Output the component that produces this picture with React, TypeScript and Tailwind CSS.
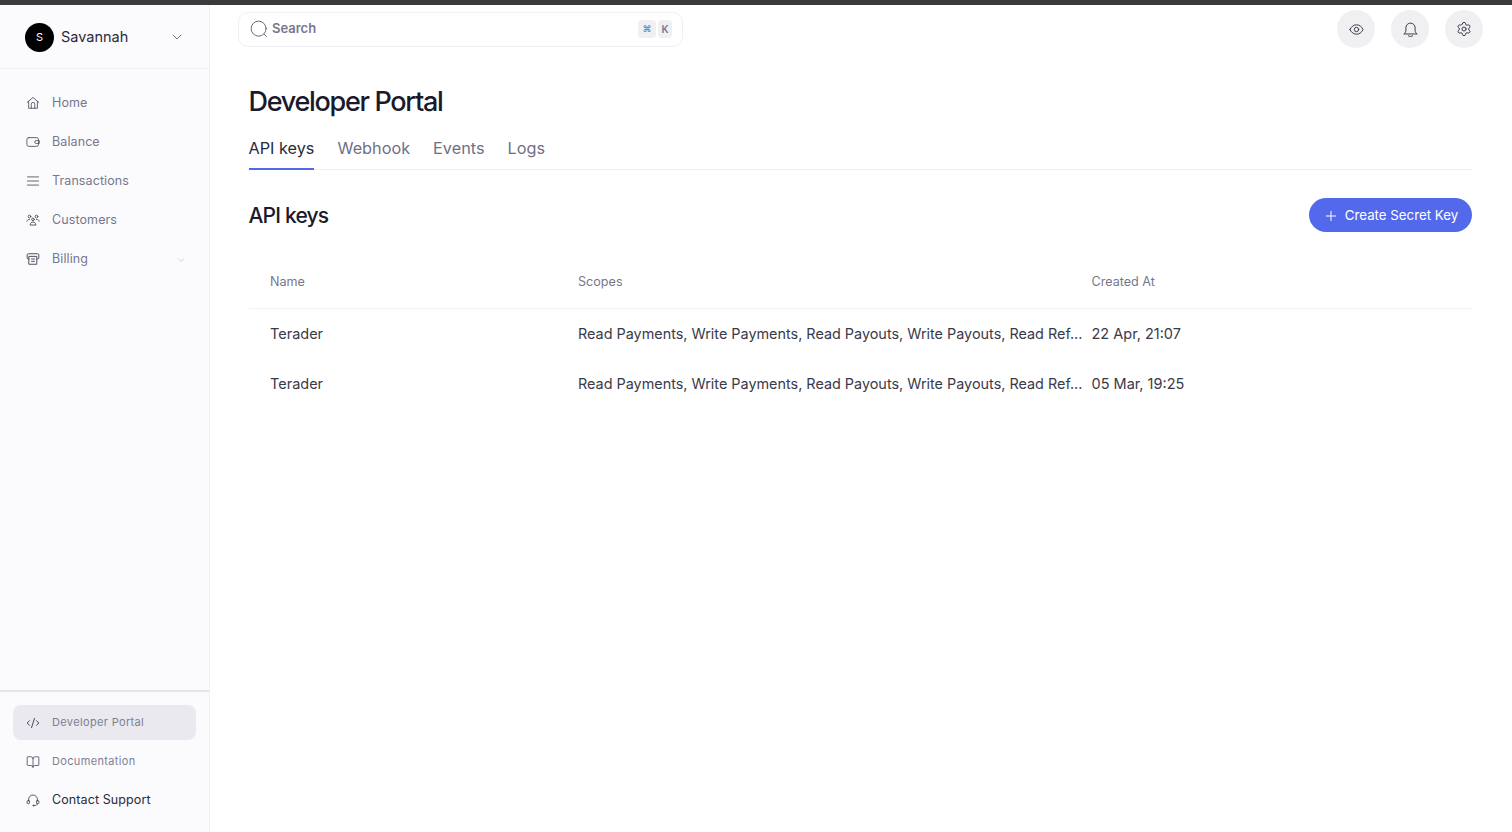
import { BookOpen, ChevronDown, CodeXml, Plus, Settings } from "lucide-react";
import type { ReactNode } from "react";

function Svg({ size = 14, children, width = 1.5 }: { size?: number; children: ReactNode; width?: number }) {
  return (
    <svg width={size} height={size} viewBox="0 0 24 24" fill="none" stroke="currentColor" strokeWidth={width} strokeLinecap="round" strokeLinejoin="round" className="shrink-0">
      {children}
    </svg>
  );
}

const HomeIcon = () => (
  <Svg>
    <path d="M2 11 12 2.5 22 11" />
    <path d="M4.5 9.5V21h15V9.5" />
    <path d="M9 21v-7a3 3 0 0 1 6 0v7" />
  </Svg>
);
const WalletIcon = () => (
  <Svg>
    <rect x="1.5" y="4.5" width="20" height="15" rx="3.5" />
    <path d="M22 9.5h-4.5a2.5 2.5 0 0 0 0 5H22z" />
  </Svg>
);
const ListIcon = () => (
  <Svg>
    <path d="M2.5 5h19M2.5 12h19M2.5 19h19" />
  </Svg>
);
const PeopleIcon = () => (
  <Svg width={1.6}>
    <circle cx="6" cy="6" r="2.3" />
    <circle cx="18" cy="6" r="2.3" />
    <circle cx="12" cy="11" r="2.3" />
    <path d="M1.5 14c.5-2 2-3 4.5-3M22.5 14c-.5-2-2-3-4.5-3" />
    <path d="M7 20c.5-3 2.500-4.500 5-4.500s4.500 1.500 5 4.500z" />
  </Svg>
);
const BillingIcon = () => (
  <Svg width={1.7}>
    <path d="M5.500 12H4a2 2 0 0 1-2-2V5a2 2 0 0 1 2-2h16a2 2 0 0 1 2 2v5a2 2 0 0 1-2 2h-1.500" />
    <path d="M5.500 7.500h13V21h-13z" />
    <path d="M9.500 12h5M9.500 16h5" />
  </Svg>
);
const HeadsetIcon = () => (
  <Svg>
    <path d="M4.500 14v-3a7.500 7.500 0 0 1 15 0v3" />
    <path d="M4.500 12.500a3 3 0 0 0 0 6c1 0 1.500-.5 1.500-1.500v-3c0-1-.5-1.500-1.500-1.500z" />
    <path d="M19.500 12.500a3 3 0 0 1 0 6c-1 0-1.500-.5-1.500-1.500v-3c0-1 .5-1.500 1.500-1.500z" />
    <path d="M19.500 18.500c0 2-2 3-5 3" />
    <circle cx="13" cy="21.500" r="1.200" />
  </Svg>
);

const navItems = [
  { label: "Home", icon: HomeIcon },
  { label: "Balance", icon: WalletIcon },
  { label: "Transactions", icon: ListIcon },
  { label: "Customers", icon: PeopleIcon },
  { label: "Billing", icon: BillingIcon, chevron: true },
];

const tabs = ["API keys", "Webhook", "Events", "Logs"];

const scopes = "Read Payments, Write Payments, Read Payouts, Write Payouts, Read Ref...";

const keys = [
  { name: "Terader", created: "22 Apr, 21:07" },
  { name: "Terader", created: "05 Mar, 19:25" },
];

function Sidebar() {
  return (
    <aside className="flex w-[210px] shrink-0 flex-col border-r border-[#f0f0f4] bg-[#fbfbfe]">
      <div className="flex h-[64px] items-center border-b border-[#f0f0f4] pl-[25px] pr-[24px] pt-[1px]">
        <span className="flex h-[29px] w-[29px] items-center justify-center rounded-full bg-black text-[11px] text-white">S</span>
        <span className="ml-[7px] flex-1 text-[14.500px] text-[#2a2a3a]">Savannah</span>
        <ChevronDown size={16} strokeWidth={1.25} className="text-[#55556a]" />
      </div>
      <nav className="flex flex-1 flex-col px-[13px] pt-[15px]">
        {navItems.map((item) => (
          <div key={item.label} className="flex h-[39px] items-center pl-[13px] pr-[9px] text-[12.500px] tracking-[0.1px] text-[#77778c]">
            <span className="-mt-px flex text-[#50505f]">
              <item.icon />
            </span>
            <span className="ml-[12px] flex-1">{item.label}</span>
            {item.chevron && <ChevronDown size={12} strokeWidth={1} className="text-[#a8a8b8]" />}
          </div>
        ))}
      </nav>
      <div className="flex h-[142px] flex-col border-t-2 border-[#e4e4ea] px-[13px] pt-[13px]">
        <div className="flex h-[35px] items-center rounded-lg bg-[#e9e9ef] pl-[13px] text-[11px] tracking-[0.35px] text-[#80808f]">
          <CodeXml size={14} strokeWidth={1.5} className="text-[#35354a]" />
          <span className="ml-[12px]">Developer Portal</span>
        </div>
        <div className="mt-[2px] flex h-[39px] items-center pl-[13px] text-[11px] tracking-[0.35px] text-[#80808f]">
          <BookOpen size={14} strokeWidth={1.5} className="text-[#55556a]" />
          <span className="ml-[12px]">Documentation</span>
        </div>
        <div className="flex h-[39px] items-center pl-[13px] text-[12.500px] tracking-[0.1px] text-[#2a2a3a]">
          <span className="-mt-px flex text-[#45455a]">
            <HeadsetIcon />
          </span>
          <span className="ml-[12px]">Contact Support</span>
        </div>
      </div>
    </aside>
  );
}

function TopBar() {
  return (
    <div className="flex items-center justify-between pl-[28px] pr-[29px] pt-[5px]">
      <div className="flex h-[35px] w-[445px] items-center rounded-[10px] border border-[#f0f0f4] pl-[11px] pr-[10px]">
        <span className="flex text-[#5f5f74]">
          <Svg size={18} width={1.25}>
            <circle cx="11.500" cy="11.500" r="10" />
            <path d="m19 19 3 3" />
          </Svg>
        </span>
        <span className="ml-[4px] flex-1 text-[13px] font-semibold text-[#77778c]">Search</span>
        <span className="flex h-[18px] w-[18px] items-center justify-center rounded-sm bg-[#f0f0f4] text-[9px] text-[#77778c]">⌘</span>
        <span className="ml-[2px] flex h-[18px] w-[14px] items-center justify-center rounded-sm bg-[#f0f0f4] text-[10px] font-semibold text-[#77778c]">K</span>
      </div>
      <div className="flex gap-[16px]">
        <span className="flex h-[38px] w-[38px] items-center justify-center rounded-full bg-[#f0f0f3] text-[#3a3a4a]">
          <Svg size={15} width={1.6}>
            <path d="M1.500 12C4 7 7.500 4.500 12 4.500S20 7 22.500 12C20 17 16.500 19.500 12 19.500S4 17 1.500 12z" />
            <circle cx="12" cy="12" r="3.500" />
          </Svg>
        </span>
        <span className="flex h-[38px] w-[38px] items-center justify-center rounded-full bg-[#f0f0f3] text-[#3a3a4a]">
          <Svg size={17} width={1.4}>
            <path d="M3 18c1.500-1 2.500-2.500 2.500-5V9.500a6.500 6.500 0 0 1 13 0V13c0 2.500 1 4 2.500 5z" />
            <path d="M9 21c1.500 1.200 4.500 1.200 6 0" />
          </Svg>
        </span>
        <span className="flex h-[38px] w-[38px] items-center justify-center rounded-full bg-[#f0f0f3] text-[#3a3a4a]">
          <Settings size={16} strokeWidth={1.5} />
        </span>
      </div>
    </div>
  );
}

export default function App() {
  return (
    <div className="flex h-[832px] flex-col overflow-hidden bg-white font-['Inter',sans-serif]">
      <div className="h-[5px] shrink-0 bg-[#3b3b3b]" />
      <div className="flex min-h-0 flex-1">
        <Sidebar />
        <main className="flex min-w-0 flex-1 flex-col">
          <TopBar />
          <div className="pl-[38.500px] pr-[40px]">
            <h1 className="mt-[36px] text-[27px] leading-[36px] font-medium tracking-[-1.300px] text-[#1a1a2a]">Developer Portal</h1>
            <div className="mt-[10px] flex h-[40px] gap-[23px] border-b border-[#f0f0f4]">
              {tabs.map((tab, i) => (
                <span
                  key={tab}
                  className={
                    i === 0
                      ? "-mb-px border-b-2 border-[#5469ea] pt-[6px] text-[16.250px] text-[#2a2a3a]"
                      : "pt-[6px] text-[16.250px] text-[#6f6f88]"
                  }
                >
                  {tab}
                </span>
              ))}
            </div>
            <div className="mt-[28px] flex items-center justify-between">
              <h2 className="pt-[1px] text-[21px] font-medium tracking-[-0.800px] text-[#1a1a2a]">API keys</h2>
              <button className="flex h-[34px] w-[163px] items-center justify-center gap-[6px] rounded-full bg-[#5369ec] pt-[1px] text-[13.300px] text-white">
                <Plus size={16} strokeWidth={1.5} />
                Create Secret Key
              </button>
            </div>
            <div className="mt-[24px]">
              <div className="flex h-[53px] items-center border-b border-[#f2f2f5] pl-[21.500px] text-[12.600px] text-[#77778c]">
                <span className="w-[308px]">Name</span>
                <span className="w-[513.500px]">Scopes</span>
                <span>Created At</span>
              </div>
              {keys.map((k) => (
                <div key={k.created} className="flex h-[50px] items-center pl-[21.500px] text-[14.500px] text-[#3a3a4a]">
                  <span className="w-[308px]">{k.name}</span>
                  <span className="w-[513.500px] text-[14.400px] whitespace-nowrap">{scopes}</span>
                  <span>{k.created}</span>
                </div>
              ))}
            </div>
          </div>
        </main>
      </div>
    </div>
  );
}
